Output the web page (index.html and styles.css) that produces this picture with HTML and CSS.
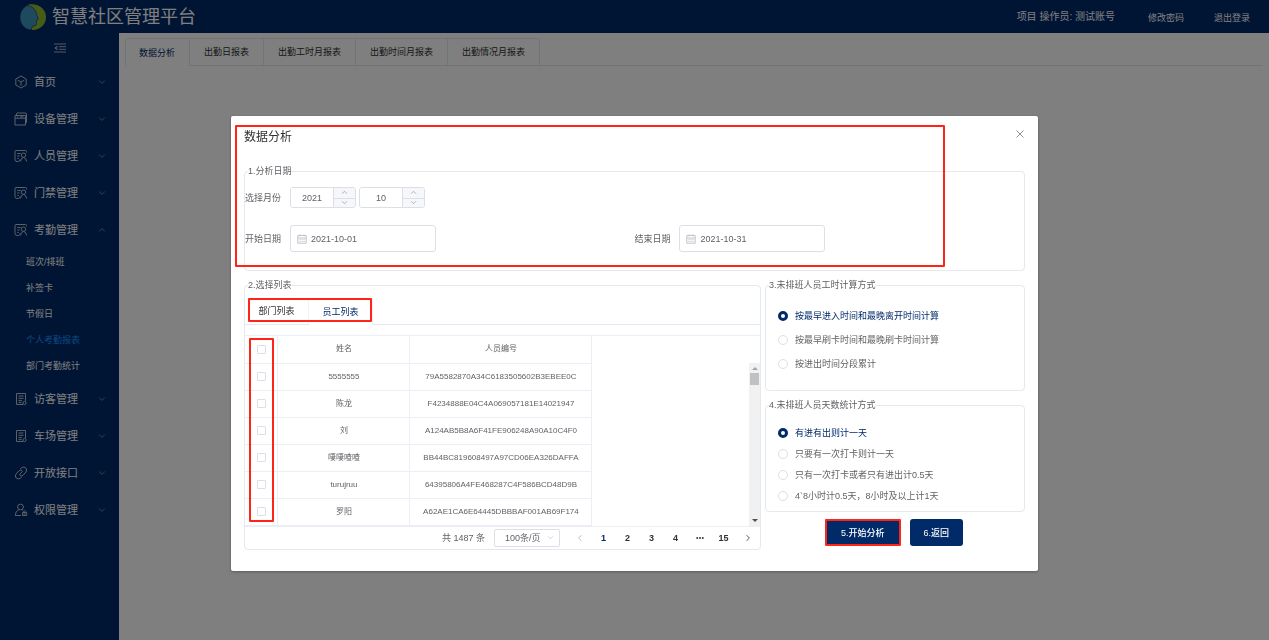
FILE: index.html
```html
<!DOCTYPE html>
<html lang="zh-CN">
<head>
<meta charset="utf-8">
<title>智慧社区管理平台</title>
<link rel="stylesheet" href="styles.css">
</head>
<body>
<svg class="sprite" aria-hidden="true">
  <symbol id="down" viewBox="0 0 10 10"><path d="M1.5 3.2 5 6.7 8.5 3.2"/></symbol>
  <symbol id="up" viewBox="0 0 10 10"><path d="M1.5 6.7 5 3.2 8.5 6.7"/></symbol>
  <symbol id="left" viewBox="0 0 10 10"><path d="M6.8 1.5 3.3 5 6.8 8.5"/></symbol>
  <symbol id="right" viewBox="0 0 10 10"><path d="M3.2 1.5 6.7 5 3.2 8.5"/></symbol>
  <symbol id="cube" viewBox="0 0 14 14"><path d="M7 1 12.2 4v6L7 13 1.8 10V4zM3.8 5.2 7 7l3.2-1.8M7 7v3.8"/></symbol>
  <symbol id="device" viewBox="0 0 14 14"><path d="M2.500 3.500V2q0-1 1-1h8q1 0 1 1v8q0 1-1 1M1 3.500h10.500V13H1zM1 6.200h10.500M3 4.900h1M6 4.900h3.500"/></symbol>
  <symbol id="person" viewBox="0 0 14 14"><path d="M12.500 3.500V2.500q0-1-1-1H2q-1 0-1 1v8q0 2 2 2h1.500q1 0 1.500-2M3.300 4.500h3.400M3.300 7h2.200M3.300 9.500h1.500"/><circle cx="9.500" cy="6.200" r="2.200"/><path d="M6.500 12.500q.3-3.500 3-4.100 2.700.6 3.200 4.100"/></symbol>
  <symbol id="list" viewBox="0 0 14 14"><path d="M11.500 9V1.500h-9v11h6.500M4.500 4h5M4.500 6.300h5M4.500 8.600h3.500M4.500 10.600h3"/><circle cx="10.500" cy="11" r="1.600"/></symbol>
  <symbol id="link" viewBox="0 0 14 14"><path d="M6.200 3.100 7.800 1.700q2-1.500 4 .3 1.700 2 .2 4L9.300 9q-1.500 1.400-3.300.6M7.800 10.900l-1.600 1.400q-2 1.500-4-.3-1.700-2-.2-4L4.700 5q1.500-1.400 3.300-.6M5.200 8.800l3.600-3.600"/></symbol>
  <symbol id="lockuser" viewBox="0 0 14 14"><circle cx="6.500" cy="4" r="2.900"/><path d="M5 6.500Q1.200 8 1.300 12.500H7M8 6.500l1 .8M8.500 9.500h4.200v3H8.500zM9.500 9.500V8.400q1.100-1.400 2.200 0v1.100M9.500 11h2"/></symbol>
  <symbol id="cal" viewBox="0 0 10 10"><path d="M.8 1.500h8.400v7.700H.8zM.8 4h8.400M3 .3v2M7 .3v2M2.500 5.700h1.200M4.500 5.700h1.200M6.500 5.700h1.200M2.500 7.400h1.200M4.500 7.400h1.200M6.500 7.400h1.200"/></symbol>
</svg>

<header class="topbar">
  <svg class="logo" viewBox="0 0 26 26" aria-hidden="true">
    <path fill="#8fb82d" d="M8 .8C18-1.500 26 5 26 13c0 8-6.500 13.500-14.300 13L9 20z"/>
    <path fill="#3e95bc" stroke="#002a68" stroke-width=".6" d="M7 1.500C13 2 16.500 6.500 17 11.500l1.600 3.300-1.900 1.200c.2 1.500-.1 3.500-.7 5.200-1 .9-2.500.6-3.500.9L11.300 26C4.500 25.500 0 20 0 13.500 0 8 3 3.500 7 1.500z"/>
  </svg>
  <h1 class="brand">智慧社区管理平台</h1>
  <span class="operator">项目 操作员: 测试账号</span>
  <a class="toplink" href="#">修改密码</a>
  <a class="toplink" href="#">退出登录</a>
</header>

<div class="shell">
  <nav class="sidebar">
    <button class="collapse" type="button" aria-label="收起菜单"><svg viewBox="0 0 12 10"><path d="M0 1h12M5 3.700h7M5 6.300h7M0 9h12M3 3.200v3.600L.8 5z"/></svg></button>
    <a class="item" href="#"><svg class="mi"><use href="#cube"/></svg><span>首页</span><svg class="ar"><use href="#down"/></svg></a>
    <a class="item" href="#"><svg class="mi"><use href="#device"/></svg><span>设备管理</span><svg class="ar"><use href="#down"/></svg></a>
    <a class="item" href="#"><svg class="mi"><use href="#person"/></svg><span>人员管理</span><svg class="ar"><use href="#down"/></svg></a>
    <a class="item" href="#"><svg class="mi"><use href="#person"/></svg><span>门禁管理</span><svg class="ar"><use href="#down"/></svg></a>
    <a class="item" href="#"><svg class="mi"><use href="#person"/></svg><span>考勤管理</span><svg class="ar"><use href="#up"/></svg></a>
    <div class="submenu">
      <a href="#">班次/排班</a>
      <a href="#">补签卡</a>
      <a href="#">节假日</a>
      <a class="current" href="#">个人考勤报表</a>
      <a href="#">部门考勤统计</a>
    </div>
    <a class="item" href="#"><svg class="mi"><use href="#list"/></svg><span>访客管理</span><svg class="ar"><use href="#down"/></svg></a>
    <a class="item" href="#"><svg class="mi"><use href="#list"/></svg><span>车场管理</span><svg class="ar"><use href="#down"/></svg></a>
    <a class="item" href="#"><svg class="mi"><use href="#link"/></svg><span>开放接口</span><svg class="ar"><use href="#down"/></svg></a>
    <a class="item" href="#"><svg class="mi"><use href="#lockuser"/></svg><span>权限管理</span><svg class="ar"><use href="#down"/></svg></a>
  </nav>
  <main class="content">
    <div class="tabs">
      <button class="tab active" type="button">数据分析</button>
      <button class="tab" type="button">出勤日报表</button>
      <button class="tab" type="button">出勤工时月报表</button>
      <button class="tab" type="button">出勤时间月报表</button>
      <button class="tab" type="button">出勤情况月报表</button>
    </div>
  </main>
</div>

<div class="overlay">
  <section class="dialog" role="dialog" aria-labelledby="dlg-title">
    <div class="mark mark-date"></div>
    <div class="dialog-head">
      <h2 id="dlg-title">数据分析</h2>
      <button class="close" type="button" aria-label="关闭"><svg viewBox="0 0 10 10"><path d="M1.500 1.500l7 7M8.500 1.500l-7 7"/></svg></button>
    </div>

    <fieldset class="group dates">
      <legend>1.分析日期</legend>
      <div class="row">
        <label class="lbl" for="year">选择月份</label>
        <div class="spin">
          <input id="year" type="text" value="2021">
          <div class="steps"><button type="button" aria-label="增加"><svg><use href="#up"/></svg></button><button type="button" aria-label="减少"><svg><use href="#down"/></svg></button></div>
        </div>
        <div class="spin">
          <input type="text" value="10" aria-label="月">
          <div class="steps"><button type="button" aria-label="增加"><svg><use href="#up"/></svg></button><button type="button" aria-label="减少"><svg><use href="#down"/></svg></button></div>
        </div>
      </div>
      <div class="halves">
        <div class="row"><label class="lbl" for="from">开始日期</label><div class="date"><svg><use href="#cal"/></svg><input id="from" type="text" value="2021-10-01"></div></div>
        <div class="row"><label class="lbl" for="to">结束日期</label><div class="date"><svg><use href="#cal"/></svg><input id="to" type="text" value="2021-10-31"></div></div>
      </div>
    </fieldset>

    <div class="columns">
      <fieldset class="group picker">
        <legend>2.选择列表</legend>
        <div class="mark mark-tabs"></div>
        <div class="mark mark-checks"></div>
        <div class="subtabs">
          <button class="subtab" type="button">部门列表</button>
          <button class="subtab active" type="button">员工列表</button>
        </div>
        <div class="grid">
          <table>
            <colgroup><col class="c-check"><col class="c-name"><col class="c-id"></colgroup>
            <thead>
              <tr><th><input type="checkbox" aria-label="全选"></th><th>姓名</th><th>人员编号</th></tr>
            </thead>
            <tbody>
              <tr><td><input type="checkbox" aria-label="5555555"></td><td>5555555</td><td>79A5582870A34C6183505602B3EBEE0C</td></tr>
              <tr><td><input type="checkbox" aria-label="陈龙"></td><td>陈龙</td><td>F4234888E04C4A069057181E14021947</td></tr>
              <tr><td><input type="checkbox" aria-label="刘"></td><td>刘</td><td>A124AB5B8A6F41FE906248A90A10C4F0</td></tr>
              <tr><td><input type="checkbox" aria-label="啛啛喳喳"></td><td>啛啛喳喳</td><td>BB44BC819608497A97CD06EA326DAFFA</td></tr>
              <tr><td><input type="checkbox" aria-label="turujruu"></td><td>turujruu</td><td>64395806A4FE468287C4F586BCD48D9B</td></tr>
              <tr><td><input type="checkbox" aria-label="罗阳"></td><td>罗阳</td><td>A62AE1CA6E64445DBBBAF001AB69F174</td></tr>
            </tbody>
          </table>
          <div class="scrollbar"><i class="tri tri-up"></i><i class="thumb"></i><i class="tri tri-down"></i></div>
        </div>
        <div class="pager">
          <span class="total">共 1487 条</span>
          <div class="size"><select aria-label="每页条数"><option>100条/页</option></select><svg><use href="#down"/></svg></div>
          <button type="button" class="pale" aria-label="上一页"><svg><use href="#left"/></svg></button>
          <button type="button" class="on">1</button>
          <button type="button">2</button>
          <button type="button">3</button>
          <button type="button">4</button>
          <button type="button" aria-label="更多"><svg class="dots" viewBox="0 0 10 10"><circle cx="1.500" cy="5" r="1.200"/><circle cx="5" cy="5" r="1.200"/><circle cx="8.500" cy="5" r="1.200"/></svg></button>
          <button type="button">15</button>
          <button type="button" aria-label="下一页"><svg><use href="#right"/></svg></button>
        </div>
      </fieldset>

      <div class="side">
        <fieldset class="group hours">
          <legend>3.未排班人员工时计算方式</legend>
          <label><input type="radio" name="hours" checked><span>按最早进入时间和最晚离开时间计算</span></label>
          <label><input type="radio" name="hours"><span>按最早刷卡时间和最晚刷卡时间计算</span></label>
          <label><input type="radio" name="hours"><span>按进出时间分段累计</span></label>
        </fieldset>
        <fieldset class="group days">
          <legend>4.未排班人员天数统计方式</legend>
          <label><input type="radio" name="days" checked><span>有进有出则计一天</span></label>
          <label><input type="radio" name="days"><span>只要有一次打卡则计一天</span></label>
          <label><input type="radio" name="days"><span>只有一次打卡或者只有进出计0.5天</span></label>
          <label><input type="radio" name="days"><span>4`8小时计0.5天，8小时及以上计1天</span></label>
        </fieldset>
        <div class="actions">
          <button class="btn marked" type="button">5.开始分析</button>
          <button class="btn" type="button">6.返回</button>
        </div>
      </div>
    </div>
  </section>
</div>
</body>
</html>
```
FILE: styles.css
```css
* { box-sizing: border-box; }

body {
  margin: 0;
  min-height: 100vh;
  display: flex;
  flex-direction: column;
  background: #fff;
  color: #606266;
  font: 9px/14px "Liberation Sans", "Noto Sans CJK SC", sans-serif;
}

button, input, select { font: inherit; color: inherit; margin: 0; padding: 0; }
button { border: 0; background: none; cursor: pointer; }
a { color: inherit; text-decoration: none; }
svg { fill: none; stroke: currentColor; stroke-width: 1; flex: none; }
.sprite { position: absolute; width: 0; height: 0; }

/* Top bar */
.topbar {
  display: flex;
  align-items: center;
  height: 33px;
  padding: 0 19px 0 20px;
  background: #002a68;
  color: #fff;
}
.logo { width: 26px; height: 26px; stroke: none; }
.brand { margin: 0 auto 0 6px; font-size: 18px; line-height: 26px; font-weight: 400; }
.operator { font-size: 10px; }
.toplink { margin: 3px 0 0 33px; }
.toplink + .toplink { margin-left: 30px; }

/* Sidebar */
.shell { display: flex; flex: 1; }
.sidebar { width: 119px; flex: none; background: #002a68; color: #fff; }
.collapse { display: block; width: 100%; height: 30px; color: #aab4c8; }
.collapse svg { display: block; width: 12px; height: 10px; margin: 0 auto; }
.item {
  display: flex;
  align-items: center;
  height: 37px;
  padding: 0 13px 0 14px;
  font-size: 11px;
  line-height: 16px;
}
.item span { flex: 1; margin-left: 6px; }
.mi { width: 14px; height: 14px; color: #b8c0ce; }
.ar { width: 8px; height: 8px; color: #8794b0; }
.submenu { padding: 1px 0; }
.submenu a { display: block; height: 26px; padding-left: 26px; line-height: 26px; }
.submenu .current { color: #1890ff; }

/* Page tabs */
.content { flex: 1; padding: 5px 6px; }
.tabs { display: flex; border-bottom: 1px solid #e4e7ed; }
.tab {
  height: 27px;
  padding: 0 14px;
  border: 1px solid #e4e7ed;
  border-width: 1px 1px 0 0;
  color: #303133;
}
.tab:first-child { padding-left: 13px; border-left-width: 1px; border-top-left-radius: 3px; }
.tab:last-child { border-top-right-radius: 3px; }
.tab.active { height: 28px; margin-bottom: -1px; background: #fff; color: #002a68; }

/* Dialog */
.overlay {
  position: fixed;
  inset: 0;
  display: flex;
  justify-content: center;
  align-items: flex-start;
  padding-top: 116px;
  background: rgba(0, 0, 0, .5);
}
.dialog {
  position: relative;
  width: 63.6%;
  padding: 13px 13px 21px;
  border-radius: 2px;
  background: #fff;
  box-shadow: 0 1px 3px rgba(0, 0, 0, .3);
}
.dialog-head { display: flex; justify-content: space-between; align-items: flex-start; height: 35px; }
.dialog-head h2 { margin: 0; font-size: 12px; line-height: 16px; font-weight: 400; color: #303133; }
.close { width: 10px; height: 10px; color: #909399; }
.close svg { display: block; width: 10px; height: 10px; }

.group {
  position: relative;
  min-width: 0;
  margin: 0;
  padding: 0;
  border: 1px solid #e3e9ef;
  border-radius: 4px;
}
.group legend { margin-left: 3px; padding: 0; line-height: 14px; }

.dates { padding: 9px 0 18px; }
.row { display: flex; align-items: center; gap: 3px; }
.lbl { width: 42px; }
.halves { display: grid; grid-template-columns: 1fr 1fr; margin-top: 17px; }
.spin {
  display: flex;
  width: 66px;
  height: 21px;
  border: 1px solid #dcdfe6;
  border-radius: 3px;
  overflow: hidden;
}
.spin input { width: 42px; border: 0; text-align: center; outline: 0; }
.steps { display: grid; grid-template-rows: 1fr 1fr; flex: 1; border-left: 1px solid #dcdfe6; background: #f5f7fa; }
.steps button { display: flex; align-items: center; justify-content: center; min-height: 0; color: #909399; }
.steps button + button { border-top: 1px solid #dcdfe6; }
.steps svg { width: 7px; height: 7px; }
.date {
  display: flex;
  align-items: center;
  gap: 4px;
  width: 146px;
  height: 27px;
  padding: 0 6px;
  border: 1px solid #dcdfe6;
  border-radius: 3px;
}
.date svg { width: 10px; height: 10px; color: #c0c4cc; }
.date input { flex: 1; min-width: 0; border: 0; outline: 0; }

.columns { display: grid; grid-template-columns: minmax(0, 1fr) 260px; align-items: start; gap: 4px; margin-top: 7px; }

/* Person picker */
.subtabs { display: flex; margin-top: 6px; border-bottom: 1px solid #e4e7ed; }
.subtab { width: 64px; height: 26px; border-right: 1px solid #f0f2f5; color: #303133; }
.subtab.active { height: 27px; margin-bottom: -1px; background: #fff; color: #002a68; }
.grid {
  display: grid;
  grid-template-columns: minmax(0, 1fr) 11px;
  margin-top: 10px;
  border: 1px solid #ebeef5;
  border-width: 1px 0;
}
table { width: 347px; table-layout: fixed; border-collapse: collapse; font-size: 8px; line-height: 12px; }
.c-check { width: 33px; }
.c-name { width: 132px; }
.c-id { width: 182px; }
th, td {
  height: 27px;
  padding: 0;
  border: 1px solid #ebeef5;
  border-width: 0 1px 1px 0;
  text-align: center;
  vertical-align: middle;
  font-weight: 400;
  white-space: nowrap;
}
input[type="checkbox"] {
  appearance: none;
  display: block;
  width: 9px;
  height: 9px;
  margin: 0 auto;
  border: 1px solid #dcdfe6;
  border-radius: 1px;
  background: #fff;
}
.scrollbar { display: flex; flex-direction: column; align-items: center; gap: 3px; margin-top: 27px; padding: 4px 0; background: #f1f1f1; }
.tri { border: 3px solid transparent; border-width: 0 3px; }
.tri-up { border-bottom: 3px solid #a3a3a3; }
.tri-down { margin-top: auto; border-top: 3px solid #505050; }
.thumb { width: 9px; height: 12px; background: #c1c1c1; }

.pager { display: flex; justify-content: flex-end; align-items: center; gap: 3px; height: 22px; padding-right: 2px; }
.total { margin-right: 6px; }
.size { display: flex; align-items: center; margin-right: 6px; width: 66px; height: 18px; border: 1px solid #dcdfe6; border-radius: 2px; }
.size select { appearance: none; flex: 1; min-width: 0; height: 16px; padding-left: 10px; border: 0; background: none; }
.size svg { width: 7px; height: 7px; margin-right: 5px; color: #c0c4cc; }
.pager button { display: flex; align-items: center; justify-content: center; width: 21px; height: 18px; font-weight: 700; color: #303133; }
.pager button svg { width: 8px; height: 8px; }
.pager .on { color: #002a68; }
.pager .pale { color: #a8abb2; }
.pager .dots { fill: currentColor; stroke: none; }

/* Rule options */
.side { display: flex; flex-direction: column; gap: 7px; }
.hours { padding: 12px 0 14px 12px; }
.days { padding: 10px 0 5px 12px; }
.hours legend, .days legend { margin-left: -9px; }
.hours label, .days label { display: flex; align-items: center; gap: 7px; height: 24px; }
.days label { height: 21px; }
input[type="radio"] {
  appearance: none;
  width: 10px;
  height: 10px;
  border: 1px solid #dcdfe6;
  border-radius: 50%;
  background: #fff;
}
input[type="radio"]:checked { border: 3px solid #002a68; }
input[type="radio"]:checked + span { color: #002a68; }

.actions { display: flex; justify-content: center; gap: 9px; padding-right: 2px; }
.btn { height: 27px; padding: 0 14px; border-radius: 3px; background: #002a68; color: #fff; font-weight: 500; }
.btn.marked { border: 2px solid #ff2418; border-radius: 1px; }

/* Highlight frames laid over the dialog */
.mark { position: absolute; z-index: 1; border: 2px solid #ff2418; border-radius: 1px; pointer-events: none; }
.mark-date { left: 4px; top: 9px; width: 710px; height: 142px; }
.mark-tabs { left: 3px; top: 6px; width: 124px; height: 24px; }
.mark-checks { left: 4px; top: 46px; width: 25px; height: 184px; }
```
